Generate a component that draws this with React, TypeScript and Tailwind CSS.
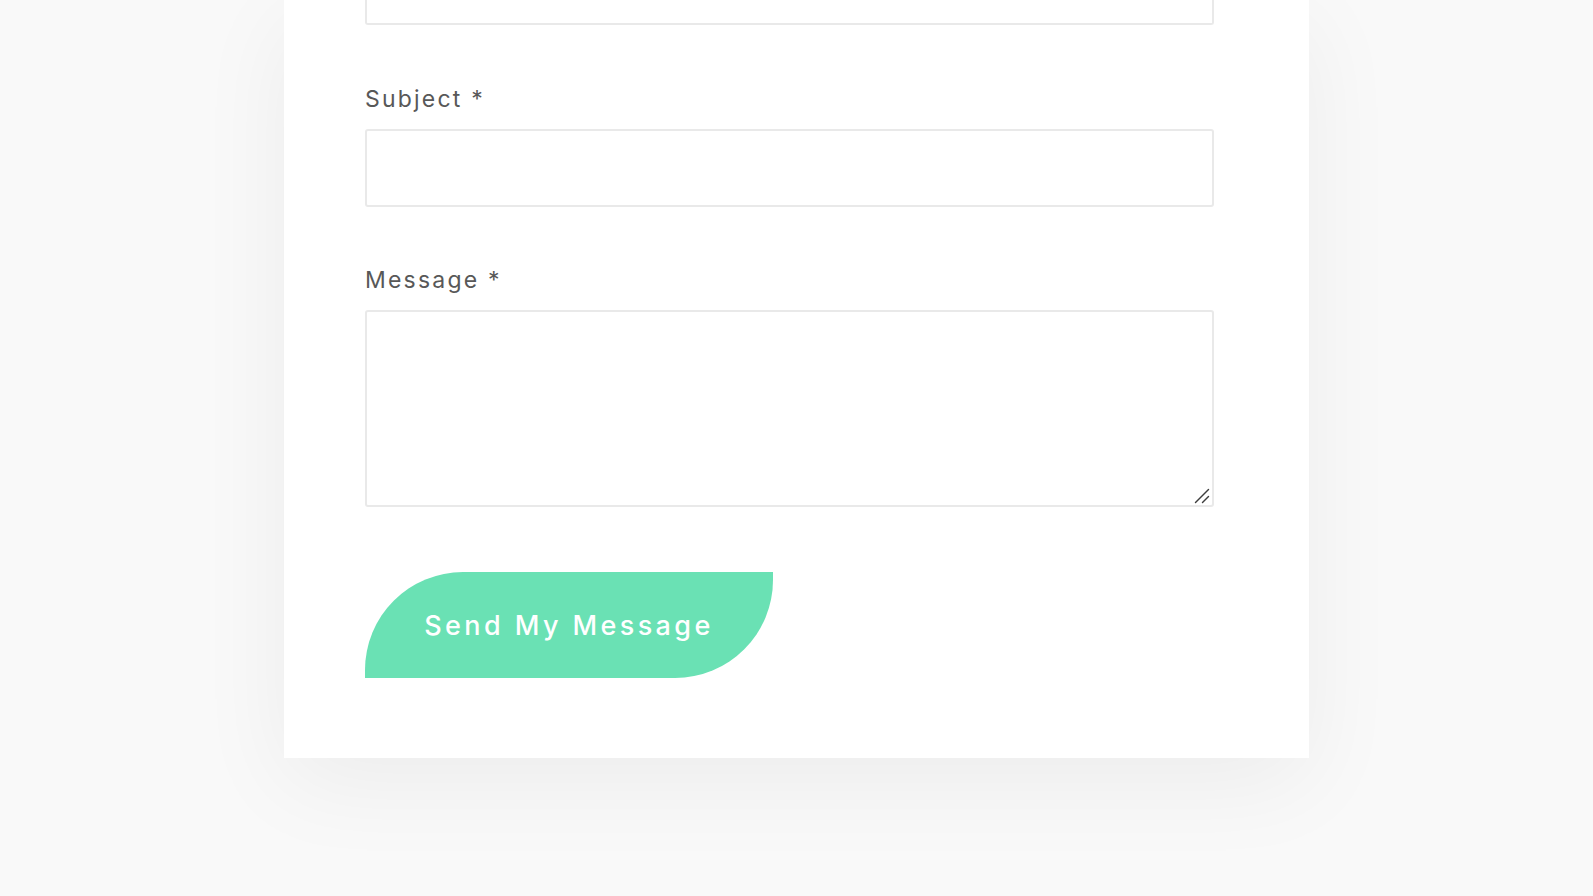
import React from "react";

export default function App() {
  return (
    <div className="min-h-[896px] w-full bg-[#f9f9f9] overflow-hidden" style={{ fontFamily: "Inter, 'Open Sans', sans-serif" }}>
      <div className="ml-[284px] w-[1025px] bg-white shadow-[0_24px_90px_rgba(0,0,0,0.055)] pl-[81px] pb-[80px]">
        <div className="w-[849px] h-[25px] border-2 border-t-0 border-[#e9e9e9] rounded-b-[3px] bg-white" />
        <label className="block mt-[56px] mb-[12px] text-[23px] leading-[36px] tracking-[2.2px] text-[#585858]">Subject *</label>
        <input type="text" className="block w-[849px] h-[78px] border-2 border-[#e9e9e9] rounded-[3px] bg-white outline-none" />
        <label className="block mt-[55px] mb-[12px] text-[23px] leading-[36px] tracking-[2.2px] text-[#585858]">Message *</label>
        <div className="relative w-[849px] h-[197px]">
          <textarea className="block w-full h-full resize-none border-2 border-[#e9e9e9] rounded-[3px] bg-white outline-none" />
          <svg className="absolute right-[4px] bottom-[3px] pointer-events-none" width="16" height="16" viewBox="0 0 16 16">
            <line x1="1.5" y1="14.5" x2="14.5" y2="1.5" stroke="#3d3d3d" strokeWidth="1.4" strokeLinecap="round" />
            <line x1="8.5" y1="14.5" x2="14.5" y2="8.5" stroke="#3d3d3d" strokeWidth="1.4" strokeLinecap="round" />
          </svg>
        </div>
        <button className="mt-[65px] flex items-center justify-center pt-[3px] w-[408px] h-[106px] bg-[#6ae1b4] rounded-tl-[98px] rounded-br-[98px] text-white text-[27px] font-medium tracking-[3.4px]">
          Send My Message
        </button>
      </div>
    </div>
  );
}
